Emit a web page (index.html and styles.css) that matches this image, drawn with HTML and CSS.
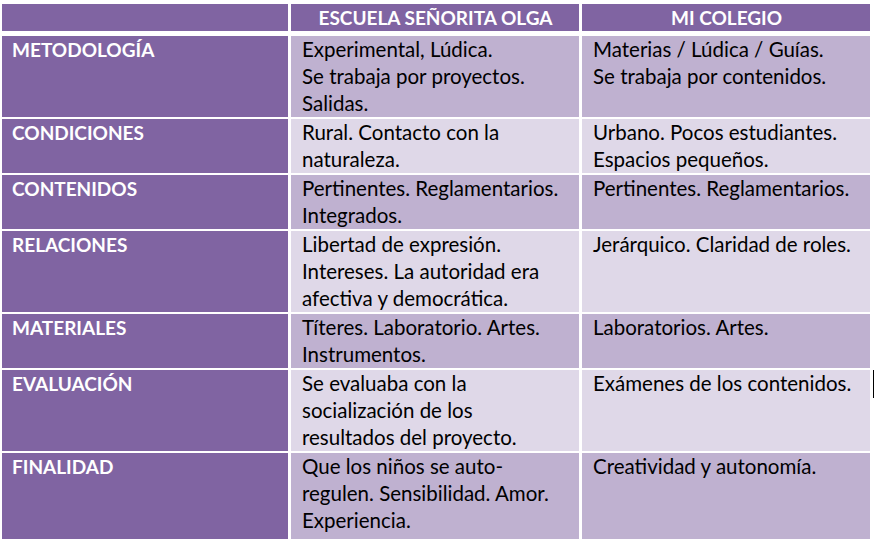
FILE: index.html
```html
<!DOCTYPE html>
<html lang="es">
<head>
<meta charset="utf-8">
<title>Comparación</title>
<link rel="stylesheet" href="styles.css">
</head>
<body>
<div class="page">
  <div class="table">
    <div class="cell head"></div>
    <div class="cell head center">ESCUELA SEÑORITA OLGA</div>
    <div class="cell head center">MI COLEGIO</div>

    <div class="cell label first">METODOLOGÍA</div>
    <div class="cell odd first">Experimental, Lúdica.<br>Se trabaja por proyectos.<br>Salidas.</div>
    <div class="cell odd first">Materias / Lúdica / Guías.<br>Se trabaja por contenidos.</div>

    <div class="cell label">CONDICIONES</div>
    <div class="cell even">Rural. Contacto con la<br>naturaleza.</div>
    <div class="cell even">Urbano. Pocos estudiantes.<br>Espacios pequeños.</div>

    <div class="cell label">CONTENIDOS</div>
    <div class="cell odd">Pertinentes. Reglamentarios.<br>Integrados.</div>
    <div class="cell odd">Pertinentes. Reglamentarios.</div>

    <div class="cell label">RELACIONES</div>
    <div class="cell even">Libertad de expresión.<br>Intereses. La autoridad era<br>afectiva y democrática.</div>
    <div class="cell even">Jerárquico. Claridad de roles.</div>

    <div class="cell label">MATERIALES</div>
    <div class="cell odd">Títeres. Laboratorio. Artes.<br>Instrumentos.</div>
    <div class="cell odd">Laboratorios. Artes.</div>

    <div class="cell label">EVALUACIÓN</div>
    <div class="cell even">Se evaluaba con la<br>socialización de los<br>resultados del proyecto.</div>
    <div class="cell even">Exámenes de los contenidos.</div>

    <div class="cell label last">FINALIDAD</div>
    <div class="cell odd last">Que los niños se auto-<br>regulen. Sensibilidad. Amor.<br>Experiencia.</div>
    <div class="cell odd last">Creatividad y autonomía.</div>
  </div>
  <span class="caret"></span>
</div>
</body>
</html>
```

FILE: styles.css
```css
html, body {
  margin: 0;
  padding: 0;
  background: #ffffff;
}

body {
  width: 875px;
  height: 539px;
  overflow: hidden;
  font-family: "Lato", "Liberation Sans", sans-serif;
}

.page {
  position: relative;
  padding: 4px 0 0 2px;
}

.table {
  display: grid;
  grid-template-columns: 286px 288px 288px;
  column-gap: 3px;
  row-gap: 2px;
  width: 868px;
}

.cell {
  font-size: 20.5px;
  line-height: 27px;
  padding: 0 10px 0 11px;
  color: #000000;
  white-space: nowrap;
}

.head {
  background: #8064a2;
  color: #ffffff;
  font-weight: 700;
  font-size: 19px;
  height: 27px;
  margin-bottom: 3px;
}

.center {
  text-align: center;
}

.label {
  background: #8064a2;
  color: #ffffff;
  font-weight: 700;
  font-size: 19px;
  padding-left: 10px;
}

.odd {
  background: #bfb1d0;
}

.even {
  background: #dfd8e8;
}

.last {
  padding-bottom: 8px;
}

.caret {
  position: absolute;
  left: 873px;
  top: 370px;
  width: 1px;
  height: 28px;
  background: #000000;
}
```
